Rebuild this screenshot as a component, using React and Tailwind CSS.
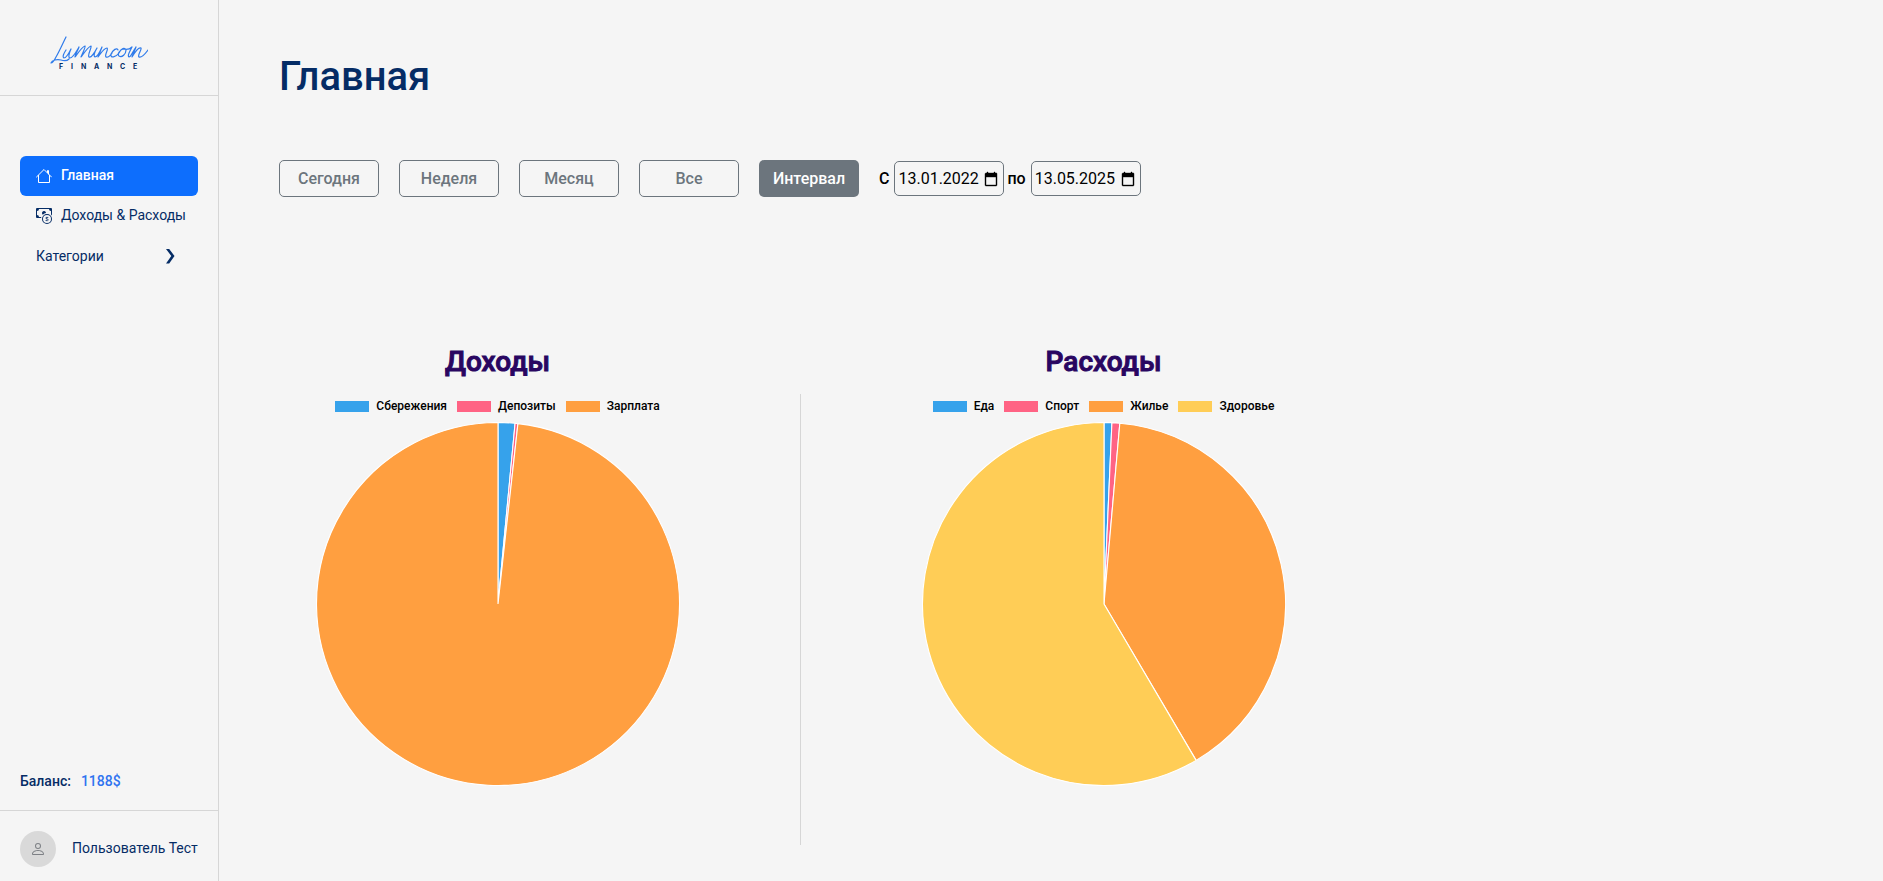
const NAVY = '#052C65';

const income = {
  title: 'Доходы',
  slices: [
    { label: 'Сбережения', color: '#36A2EB', degrees: 5.4 },
    { label: 'Депозиты', color: '#FF6384', degrees: 0.9 },
    { label: 'Зарплата', color: '#FF9F40', degrees: 353.7 },
  ],
};

const expenses = {
  title: 'Расходы',
  slices: [
    { label: 'Еда', color: '#36A2EB', degrees: 2.5 },
    { label: 'Спорт', color: '#FF6384', degrees: 2.5 },
    { label: 'Жилье', color: '#FF9F40', degrees: 144.5 },
    { label: 'Здоровье', color: '#FFCD56', degrees: 210.5 },
  ],
};

function Logo() {
  return (
    <svg width="98" height="36" viewBox="0 0 98 36" role="img" aria-label="Lumincoin Finance">
      <path
        d="M16 1C13 7 9 16 6 21C4 25 2 27 1 27C2 24 7 23 11 24C14 25 17 25 19 23M16 14C14 17 12 21 14 22C16 22 19 17 21 13C19 17 18 22 20 22C23 22 26 16 29 11C28 14 25 19 25 21C28 17 32 11 35 10C36 11 32 18 31 21C34 17 38 11 41 10C42 12 37 19 39 21C41 22 45 16 47 12C45 15 43 20 45 21C47 21 49 18 52 11L48 21C51 17 54 12 57 12C59 13 54 19 56 21C58 22 61 19 62 17M68 14C67 11 63 14 61 18C60 23 66 21 69 17C71 12 75 11 76 14C76 18 72 22 69 20C67 18 70 14 73 13C77 14 80 13 82 11C80 15 77 20 79 21C81 21 83 15 86 11L82 21C85 16 89 11 91 12C92 14 87 19 89 21C91 22 95 18 98 14"
        fill="none"
        stroke="#2F7BEA"
        strokeWidth="1.2"
        strokeLinecap="round"
        strokeLinejoin="round"
      />
      <text y="33" fill={NAVY} fontFamily="Inter, sans-serif" fontSize="7" fontWeight="700">
        {'FINANCE'.split('').map((letter, i) => (
          <tspan key={i} x={[9, 21, 31, 44, 57, 70, 83][i]}>{letter}</tspan>
        ))}
      </text>
    </svg>
  );
}

function HouseIcon() {
  return (
    <svg width="16" height="16" viewBox="0 0 16 16" fill="none" stroke="currentColor" aria-hidden="true">
      <path d="M0.500 9L8 1.500L15.500 9M2.500 7.500V14.500H13.500V7.500M11.500 4.500V2.500H12.500V6" strokeLinecap="round" strokeLinejoin="round" />
    </svg>
  );
}

function CashCoinIcon() {
  return (
    <svg width="16" height="16" viewBox="0 0 16 16" fill="currentColor" aria-hidden="true">
      <path fillRule="evenodd" d="M11 15a4 4 0 1 0 0-8 4 4 0 0 0 0 8m5-4a5 5 0 1 1-10 0 5 5 0 0 1 10 0" />
      <path d="M9.438 11.944c.047.596.518 1.06 1.363 1.116v.44h.375v-.443c.875-.061 1.386-.529 1.386-1.207 0-.618-.39-.936-1.09-1.1l-.296-.07v-1.2c.376.043.614.248.671.532h.658c-.047-.575-.54-1.024-1.329-1.073V8.5h-.375v.45c-.747.073-1.255.522-1.255 1.158 0 .562.378.92 1.007 1.066l.248.061v1.272c-.384-.058-.639-.27-.696-.563h-.668zm1.36-1.354c-.369-.085-.569-.26-.569-.522 0-.294.216-.514.572-.578v1.1zm.432.746c.449.104.655.272.655.569 0 .339-.257.571-.709.614v-1.195z" />
      <path d="M1 0a1 1 0 0 0-1 1v8a1 1 0 0 0 1 1h4.083q.088-.517.258-1H3a2 2 0 0 0-2-2V3a2 2 0 0 0 2-2h10a2 2 0 0 0 2 2v3.528c.38.34.717.728 1 1.154V1a1 1 0 0 0-1-1z" />
      <path d="M9.998 5.083 10 5a2 2 0 1 0-3.132 1.65 6 6 0 0 1 3.13-1.567" />
    </svg>
  );
}

function ChevronIcon() {
  return (
    <svg width="16" height="16" viewBox="0 0 16 16" fill="currentColor" aria-hidden="true">
      <path d="M4 1H7.200L12.500 8L7.200 15.500H4L9.300 8Z" />
    </svg>
  );
}

function PersonIcon() {
  return (
    <svg width="16" height="16" viewBox="0 0 16 16" fill="#7d8085" aria-hidden="true">
      <path d="M8 8a3 3 0 1 0 0-6 3 3 0 0 0 0 6m2-3a2 2 0 1 1-4 0 2 2 0 0 1 4 0m4 8c0 1-1 1-1 1H3s-1 0-1-1 1-4 6-4 6 3 6 4m-1-.004c-.001-.246-.154-.986-.832-1.664C11.516 10.680 10.289 10 8 10s-3.516.680-4.168 1.332c-.678.678-.83 1.418-.832 1.664z" />
    </svg>
  );
}

function CalendarIcon() {
  return (
    <svg width="14" height="16" viewBox="0 0 14 16" aria-hidden="true">
      <path d="M3 1H4V2H10V1H11V2H12.500Q13 2 13 3V14Q13 15 12 15H2Q1 15 1 14V3Q1 2 2 2H3ZM2 6V14H12V6Z" fill="#000" stroke="#000" strokeWidth="0.4" fillRule="evenodd" />
    </svg>
  );
}

function DateField({ id, label, value }) {
  return (
    <div className="flex items-center gap-[5px]">
      <label htmlFor={id} className="font-medium">{label}</label>
      <div className="flex h-[35px] w-[110px] items-center justify-between rounded-[5px] border border-[#6c757d] pr-[5px] pl-[3px]">
        <input id={id} type="text" defaultValue={value} className="w-[84px] bg-transparent outline-none" />
        <button type="button" aria-label="Открыть календарь"><CalendarIcon /></button>
      </div>
    </div>
  );
}

function Pie({ title, slices }) {
  const r = 181.5;
  const c = 182;
  let angle = 0;
  const point = (deg) => {
    const rad = (deg * Math.PI) / 180;
    return `${c + r * Math.sin(rad)} ${c - r * Math.cos(rad)}`;
  };
  return (
    <svg width="364" height="364" viewBox="0 0 364 364" role="img" aria-label={title}>
      {slices.map(({ label, color, degrees }) => {
        const from = point(angle);
        angle += degrees;
        const to = point(angle);
        return (
          <path
            key={label}
            d={`M${c} ${c}L${from}A${r} ${r} 0 ${degrees > 180 ? 1 : 0} 1 ${to}Z`}
            fill={color}
            stroke="#fff"
            strokeWidth="1.1"
            strokeLinejoin="bevel"
          />
        );
      })}
    </svg>
  );
}

function Chart({ title, slices }) {
  return (
    <section className="flex w-[437px] flex-col items-center">
      <h2 className="text-[28px] leading-8 font-medium text-[#290661] [-webkit-text-stroke:1px_#290661]">{title}</h2>
      <ul className="mt-[18px] mb-[6px] flex h-5 items-center gap-[10px]">
        {slices.map(({ label, color }) => (
          <li key={label} className="flex items-center gap-[7px] text-xs font-medium text-black">
            <span className="h-[11px] w-[34px]" style={{ backgroundColor: color }} />
            {label}
          </li>
        ))}
      </ul>
      <Pie title={title} slices={slices} />
    </section>
  );
}

const periods = ['Сегодня', 'Неделя', 'Месяц', 'Все'];

export default function App() {
  return (
    <div className="flex min-h-screen bg-[#f5f5f5] font-[Roboto,sans-serif] text-base">
      <aside className="flex w-[219px] shrink-0 flex-col border-r border-[#d6d6d6] text-sm text-[#052C65]">
        <a href="#" className="flex h-24 items-center justify-center border-b border-[#d6d6d6] pt-3 pr-5">
          <Logo />
        </a>
        <nav className="mt-15 flex flex-col px-5">
          <a href="#" className="flex h-10 items-center gap-[9px] rounded-md bg-[#0d6efd] px-4 font-medium text-white">
            <HouseIcon />
            <span className="pb-0.5">Главная</span>
          </a>
          <a href="#" className="flex h-10 items-center gap-[9px] pl-4 whitespace-nowrap">
            <CashCoinIcon />
            <span className="pb-0.5">Доходы & Расходы</span>
          </a>
          <button type="button" className="flex h-10 items-center justify-between pr-5 pl-4">
            Категории
            <ChevronIcon />
          </button>
        </nav>
        <p className="mt-auto flex gap-[10px] px-5 pb-[19px] font-medium">
          Баланс: <span className="text-[#2f73f0]">1188$</span>
        </p>
        <div className="flex items-center gap-4 border-t border-[#d6d6d6] px-5 pt-5 pb-[14px] whitespace-nowrap">
          <span className="flex size-9 shrink-0 items-center justify-center rounded-full bg-[#d9d9d9]">
            <PersonIcon />
          </span>
          <span className="pb-0.5">Пользователь Тест</span>
        </div>
      </aside>
      <main className="min-w-0 flex-1 px-[60px] pt-[53px]">
        <h1 className="text-[40px] leading-12 font-medium text-[#052C65]">Главная</h1>
        <div className="mt-[59px] flex flex-wrap items-center gap-5">
          {periods.map((period) => (
            <button key={period} type="button" className="h-[37px] w-25 rounded-[5px] border border-[#6c757d] font-medium text-[#6c757d]">
              {period}
            </button>
          ))}
          <button type="button" className="h-[37px] w-25 rounded-[5px] bg-[#6c757d] font-medium text-white">Интервал</button>
          <div className="flex gap-[3px]">
            <DateField id="date-from" label="С" value="13.01.2022" />
            <DateField id="date-to" label="по" value="13.05.2025" />
          </div>
        </div>
        <div className="mt-[149px] flex">
          <Chart {...income} />
          <div className="mt-12 ml-[84px] h-[451px] w-px bg-[#d6d6d6]" />
          <div className="ml-[84px]">
            <Chart {...expenses} />
          </div>
        </div>
      </main>
    </div>
  );
}
